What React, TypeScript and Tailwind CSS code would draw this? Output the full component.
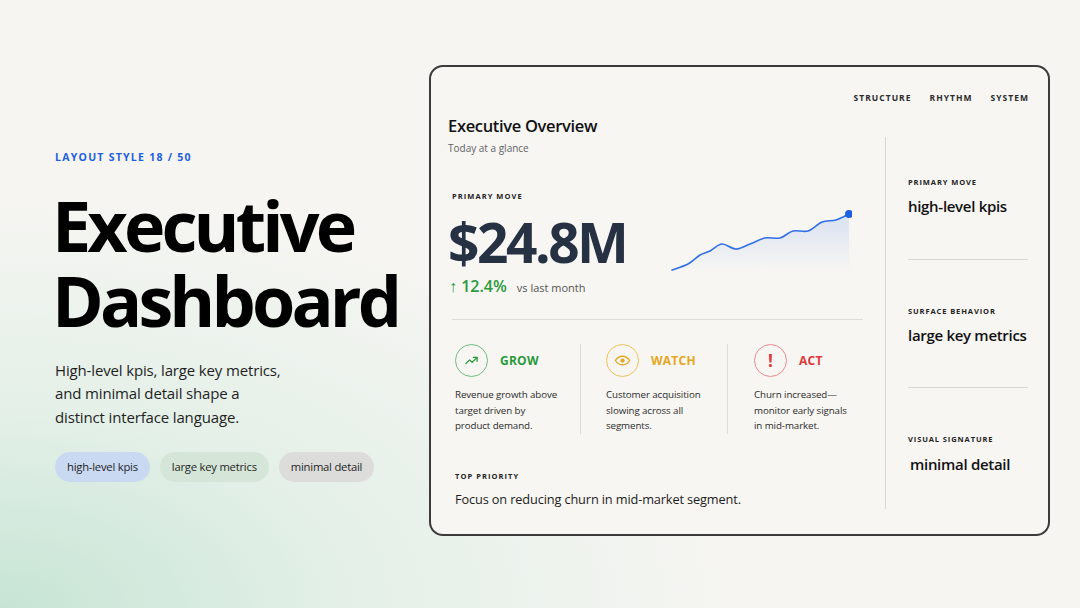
import React from "react";

const pts: [number, number][] = [
  [2, 62], [18, 56], [30, 47], [40, 43], [52, 36], [66, 41], [80, 36], [95, 30],
  [110, 30], [123, 23], [138, 23], [152, 14], [166, 12], [179, 6],
];

function smooth(p: [number, number][]) {
  let d = `M${p[0][0]},${p[0][1]}`;
  for (let i = 0; i < p.length - 1; i++) {
    const p0 = p[i - 1] || p[i];
    const p1 = p[i];
    const p2 = p[i + 1];
    const p3 = p[i + 2] || p2;
    const c1x = p1[0] + (p2[0] - p0[0]) / 6;
    const c1y = p1[1] + (p2[1] - p0[1]) / 6;
    const c2x = p2[0] - (p3[0] - p1[0]) / 6;
    const c2y = p2[1] - (p3[1] - p1[1]) / 6;
    d += ` C${c1x},${c1y} ${c2x},${c2y} ${p2[0]},${p2[1]}`;
  }
  return d;
}

function Chart() {
  const line = smooth(pts);
  const area = `${line} L179,64 L2,64 Z`;
  return (
    <svg width="182" height="66" viewBox="0 0 182 66" className="block">
      <defs>
        <linearGradient id="g" x1="0" y1="0" x2="0" y2="1">
          <stop offset="0%" stopColor="#2f6fe8" stopOpacity="0.15" />
          <stop offset="100%" stopColor="#2f6fe8" stopOpacity="0" />
        </linearGradient>
      </defs>
      <path d={area} fill="url(#g)" />
      <path d={line} fill="none" stroke="#2f6fe8" strokeWidth="1.6" strokeLinecap="round" />
      <circle cx="179" cy="6" r="4" fill="#1f5fe6" />
    </svg>
  );
}

function Signal({
  icon,
  label,
  color,
  ring,
  text,
}: {
  icon: React.ReactNode;
  label: string;
  color: string;
  ring: string;
  text: string[];
}) {
  return (
    <div className="flex flex-col">
      <div className="flex items-center gap-[12px]">
        <div className={`w-[33px] h-[33px] rounded-full border flex items-center justify-center ${ring}`}>{icon}</div>
        <span className={`text-[12px] font-bold tracking-[0.02em] ${color}`}>{label}</span>
      </div>
      <div className="mt-[10px] text-[9.75px] leading-[15.5px] tracking-[-0.01em] text-[#2b2b2b]">
        {text.map((t) => (
          <div key={t} className="whitespace-nowrap">{t}</div>
        ))}
      </div>
    </div>
  );
}

export default function App() {
  return (
    <div
      className="w-[1080px] h-[608px] overflow-hidden bg-[#f6f5f2] bg-[radial-gradient(ellipse_at_0%_100%,#c6e4d4_0%,rgba(214,236,224,0.6)_22%,rgba(246,245,242,0)_48%)] flex"
      style={{ fontFamily: '"Open Sans", "Noto Sans", sans-serif' }}
    >
      {/* Left column */}
      <div className="w-[429px] pl-[55px] pt-[150px] shrink-0">
        <div className="text-[10.5px] font-bold tracking-[0.12em] text-[#1d5fe0]">LAYOUT STYLE 18 / 50</div>
        <h1 className="mt-[22px] -ml-[3px] text-[70px] leading-[75px] font-bold tracking-[-0.055em] text-black">
          Executive
          <br />
          Dashboard
        </h1>
        <p className="mt-[21px] text-[15px] leading-[23.5px] text-[#1f1f1f] tracking-[-0.01em]">
          High-level kpis, large key metrics,
          <br />
          and minimal detail shape a
          <br />
          distinct interface language.
        </p>
        <div className="mt-[23px] flex gap-[10px]">
          <span className="h-[30px] px-[12px] rounded-full bg-[#c9d9f2] text-[11.25px] tracking-[-0.02em] text-[#1f1f1f] flex items-center">high-level kpis</span>
          <span className="h-[30px] px-[12px] rounded-full bg-[#d5e6d8] text-[11.25px] tracking-[-0.02em] text-[#1f1f1f] flex items-center">large key metrics</span>
          <span className="h-[30px] px-[12px] rounded-full bg-[#dcdcdb] text-[11.25px] tracking-[-0.02em] text-[#1f1f1f] flex items-center">minimal detail</span>
        </div>
      </div>

      {/* Card */}
      <div className="mt-[65px] w-[621px] h-[471px] shrink-0 rounded-[14px] border-2 border-[#3b3b3b] bg-[#f7f6f3] flex flex-col">
        <div className="flex justify-end gap-[18px] pt-[25px] pr-[19px] text-[8.5px] font-bold tracking-[0.12em] text-[#2a2a2a]">
          <span>STRUCTURE</span>
          <span>RHYTHM</span>
          <span>SYSTEM</span>
        </div>
        <div className="flex flex-1 pb-[27px]">
          {/* main */}
          <div className="w-[432px] pl-[17px] pt-[9px] flex flex-col">
            <div className="text-[16.5px] font-semibold leading-[24px] tracking-[-0.02em] text-[#111]">Executive Overview</div>
            <div className="mt-[3px] text-[10px] text-[#5f6368]">Today at a glance</div>
            <div className="mt-[35px] pl-[4px] text-[7.5px] font-bold tracking-[0.14em] text-[#222]">PRIMARY MOVE</div>
            <div className="flex items-end justify-between pr-[11px]">
              <div className="flex flex-col">
                <div className="text-[55px] leading-[64px] font-bold tracking-[-0.045em] text-[#263244] mt-[8px]">$24.8M</div>
                <div className="flex items-baseline gap-[10px] pl-[1px]">
                  <span className="text-[16px] font-semibold text-[#2a9a3c]">↑ 12.4%</span>
                  <span className="text-[11px] text-[#555]">vs last month</span>
                </div>
              </div>
              <div className="mb-[24px]">
                <Chart />
              </div>
            </div>
            <div className="mt-[21px] h-px bg-[#dcdcd9] ml-[4px]" />
            <div className="mt-[24px] flex pl-[7px]">
              <div className="w-[125px]">
                <Signal
                  ring="border-[#6fbd7c]"
                  color="text-[#2a9a3c]"
                  label="GROW"
                  icon={
                    <svg width="15" height="15" viewBox="0 0 24 24" fill="none" stroke="#2a9a3c" strokeWidth="2.2" strokeLinecap="round" strokeLinejoin="round">
                      <polyline points="3 17 9 11 13 15 21 7" />
                      <polyline points="15 7 21 7 21 13" />
                    </svg>
                  }
                  text={["Revenue growth above", "target driven by", "product demand."]}
                />
              </div>
              <div className="w-px h-[90px] bg-[#dcdcd9]" />
              <div className="w-[146px] pl-[25px]">
                <Signal
                  ring="border-[#efc25a]"
                  color="text-[#e6a623]"
                  label="WATCH"
                  icon={
                    <svg width="17" height="17" viewBox="0 0 24 24" fill="none" stroke="#e6a623" strokeWidth="2" strokeLinecap="round" strokeLinejoin="round">
                      <path d="M2 12s3.6-6 10-6 10 6 10 6-3.6 6-10 6S2 12 2 12z" />
                      <circle cx="12" cy="12" r="3" fill="#e6a623" stroke="none" />
                    </svg>
                  }
                  text={["Customer acquisition", "slowing across all", "segments."]}
                />
              </div>
              <div className="w-px h-[90px] bg-[#dcdcd9]" />
              <div className="pl-[26px]">
                <Signal
                  ring="border-[#ee8a8a]"
                  color="text-[#e0383a]"
                  label="ACT"
                  icon={<span className="text-[17px] font-bold text-[#e0383a] leading-none">!</span>}
                  text={["Churn increased—", "monitor early signals", "in mid-market."]}
                />
              </div>
            </div>
            <div className="mt-[37px] pl-[7px] text-[7.5px] font-bold tracking-[0.14em] text-[#222]">TOP PRIORITY</div>
            <div className="mt-[8px] pl-[7px] text-[12.75px] text-[#1c1c1c] tracking-[-0.01em]">Focus on reducing churn in mid-market segment.</div>
          </div>
          {/* divider */}
          <div className="ml-[22px] mt-[32px] w-px bg-[#d6d6d3]" />
          {/* right */}
          <div className="pl-[22px] pt-[72px] w-[143px]">
            <div className="text-[7.5px] font-bold tracking-[0.12em] text-[#222]">PRIMARY MOVE</div>
            <div className="mt-[7px] text-[15px] font-semibold tracking-[-0.02em] text-[#111]">high-level kpis</div>
            <div className="mt-[41px] h-px bg-[#d6d6d3] w-[120px]" />
            <div className="mt-[46px] text-[7.5px] font-bold tracking-[0.12em] text-[#222]">SURFACE BEHAVIOR</div>
            <div className="mt-[7px] text-[15px] font-semibold tracking-[-0.02em] text-[#111]">large key metrics</div>
            <div className="mt-[41px] h-px bg-[#d6d6d3] w-[120px]" />
            <div className="mt-[46px] text-[7.5px] font-bold tracking-[0.12em] text-[#222]">VISUAL SIGNATURE</div>
            <div className="mt-[7px] pl-[2px] text-[15px] font-semibold tracking-[-0.02em] text-[#111]">minimal detail</div>
          </div>
        </div>
      </div>
    </div>
  );
}
